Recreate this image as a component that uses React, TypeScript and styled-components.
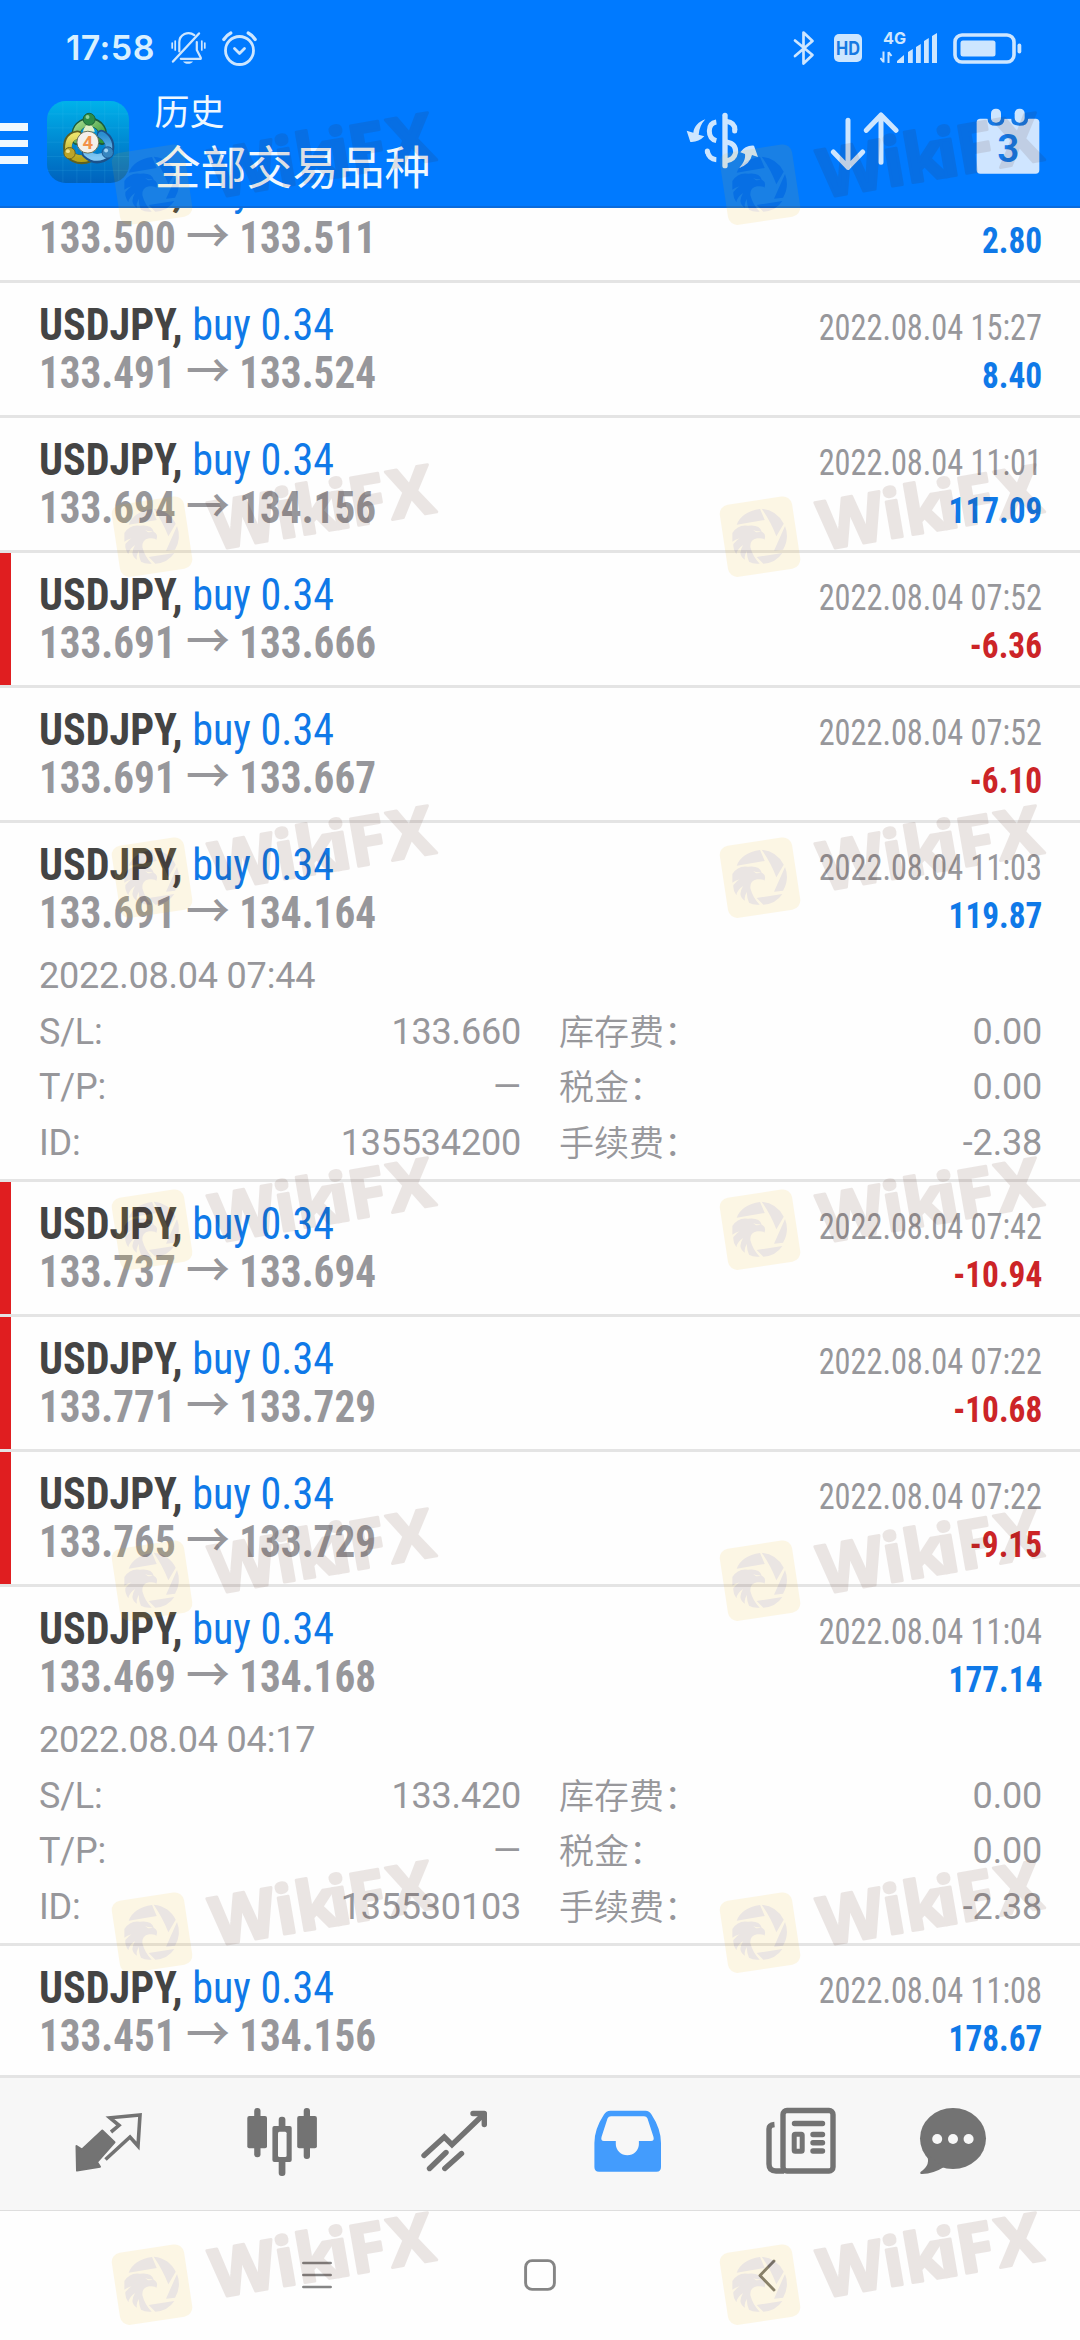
import React from "react";
import styled, { createGlobalStyle } from "styled-components";

const condensed = `"Roboto Condensed", Roboto, "Noto Sans CJK SC", sans-serif`;
const regular = `Roboto, "Noto Sans CJK SC", sans-serif`;
const pale = "#cde6ff";
const ink = "#737373";

const GlobalStyle = createGlobalStyle`
  * { box-sizing: border-box; }
  body { margin: 0; background: #fff; }
  svg { display: block; flex: none; }
`;

const Screen = styled.div`
  position: relative;
  width: 1080px;
  height: 2340px;
  overflow: hidden;
  display: flex;
  flex-direction: column;
  background: #fefefe;
  font-family: ${regular};
`;

/* ---------- header ---------- */

const Header = styled.header`
  height: 208px;
  flex: none;
  background: #007aff;
  border-bottom: 2px solid #0a6bdc;
`;

const StatusBar = styled.div`
  height: 96px;
  padding: 0 58.5px 0 66px;
  display: flex;
  align-items: center;
  justify-content: space-between;
`;

const StatusGroup = styled.div`
  display: flex;
  align-items: center;
`;

const Clock = styled.span`
  width: 105px;
  font: 600 34px/40px Inter, sans-serif;
  letter-spacing: 0.4px;
  color: #d8f0ff;
`;

const Toolbar = styled.div`
  height: 110px;
  display: flex;
  align-items: flex-start;
`;

const MenuButton = styled.div`
  width: 28px;
  margin-top: 27px;
  display: flex;
  flex-direction: column;
  gap: 9px;
`;

const MenuBar = styled.span`
  height: 7.5px;
  background: #eef8ff;
`;

const LogoBox = styled.div`
  margin: 5px 0 0 18.5px;
`;

const Titles = styled.div`
  width: 533px;
  margin-left: 26px;
  margin-top: -13px;
  color: #eff8ff;
  font-family: "Noto Sans CJK SC", sans-serif;
  font-weight: 400;
`;

const Title = styled.div`
  font-size: 35px;
  line-height: 53px;
`;

const Subtitle = styled.div`
  font-size: 46px;
  line-height: 57px;
`;

const Actions = styled.div`
  display: flex;
  align-items: center;
  margin-top: 10px;
  height: 70px;
`;

const Action = styled.div<{ $left: number }>`
  margin-left: ${(p) => p.$left}px;
`;

/* ---------- deals ---------- */

const List = styled.main`
  height: 1867px;
  flex: none;
  overflow: hidden;
`;

const Scrolled = styled.div`
  margin-top: -60px;
`;

const Deal = styled.section<{ $open: boolean; $flagged: boolean }>`
  height: ${(p) => (p.$open ? 359 : 135)}px;
  padding: 18px 38px 0 39px;
  border-bottom: 3px solid #e4e4e4;
  box-shadow: ${(p) => (p.$flagged ? "inset 11px 0 0 #e01e20" : "none")};
`;

const Line = styled.div`
  height: 48px;
  line-height: 48px;
  display: flex;
  align-items: baseline;
  justify-content: space-between;
  font-family: ${condensed};
  white-space: nowrap;
`;

const Squeezed = styled.span<{ $x: number; $from: "left" | "right" }>`
  display: inline-block;
  transform: scaleX(${(p) => p.$x});
  transform-origin: ${(p) => p.$from} center;
`;

const Symbol = styled(Squeezed)`
  font-size: 44px;
  color: #444;
`;

const Name = styled.b`
  font-weight: 700;
`;

const Side = styled.span`
  color: #0f79e8;
`;

const Prices = styled(Squeezed)`
  font-size: 44px;
  font-weight: 700;
  color: #97979b;
`;

const Arrow = styled.span`
  margin: 0 10px 0 11px;
  font: 500 47px/0 "Noto Sans CJK SC", sans-serif;
`;

const Closed = styled(Squeezed)`
  font-size: 36px;
  color: #97979b;
`;

const Profit = styled(Squeezed)<{ $loss: boolean }>`
  font-size: 36px;
  font-weight: 700;
  color: ${(p) => (p.$loss ? "#cc2427" : "#0f79e8")};
`;

const Details = styled.div`
  margin-top: 12px;
  display: grid;
  grid-template-columns: 482px 483px;
  column-gap: 38px;
  grid-auto-rows: 55.5px;
  font-size: 36px;
  line-height: 55.5px;
  letter-spacing: -0.2px;
  color: #97979b;
`;

const Opened = styled.div`
  grid-column: 1 / 3;
`;

const Field = styled.div`
  display: flex;
  justify-content: space-between;
  height: 55.5px;
`;

const LabelCjk = styled.span`
  font-family: "Noto Sans CJK SC", sans-serif;
  font-size: 35px;
  font-weight: 350;
  line-height: 50px;
  letter-spacing: 0;
`;

/* ---------- bottom ---------- */

const Tabs = styled.nav`
  height: 136px;
  flex: none;
  display: flex;
  align-items: center;
  padding: 0 62px 0 22px;
  background: #f7f7f7;
  border-top: 3px solid #e4e4e4;
  border-bottom: 1px solid #dedede;
`;

const Tab = styled.div<{ $width: number }>`
  width: ${(p) => p.$width}px;
  height: 132px;
  display: flex;
  justify-content: center;
`;

const SystemNav = styled.div`
  height: 129px;
  display: flex;
  align-items: center;
  padding: 0 0 1px 302px;
`;

const NavKey = styled.div<{ $gap: number }>`
  margin-right: ${(p) => p.$gap}px;
`;

const Mark = styled.div<{ $x: number; $y: number }>`
  position: absolute;
  left: ${(p) => p.$x}px;
  top: ${(p) => p.$y}px;
  pointer-events: none;
`;

/* ---------- icons ---------- */

const stroke = (color: string, width: number) => ({
  fill: "none",
  stroke: color,
  strokeWidth: width,
  strokeLinecap: "round" as const,
  strokeLinejoin: "round" as const,
});

const MuteIcon = () => (
  <svg width="35" height="34" viewBox="0 0 35 34" {...stroke(pale, 2.2)}>
    <path d="M2 30.500 28 2.500" strokeWidth="2.400" />
    <path d="M8.300 20.500V11.500a9.200 9.200 0 0 1 15-7.300M25.800 11v8l4 7.800v1H9.800" />
    <path d="M12 30.500h10c-1 1.700-3 2.300-5 2.300s-4-.6-5-2.300z" fill={pale} stroke="none" />
    <path d="M1.200 12v5M4.200 10v9M30.800 10v9M33.800 12v5" strokeWidth="1.700" />
  </svg>
);

const AlarmIcon = () => (
  <svg width="35" height="35" viewBox="0 0 35 35" {...stroke(pale, 2.8)}>
    <circle cx="17.500" cy="19.500" r="14" />
    <path d="M12.500 17.500l5 5 5-5" />
    <path d="M1.800 8.500q3-4.500 7-6.500M33.200 8.500q-3-4.500-7-6.500" strokeWidth="3.200" />
  </svg>
);

const BluetoothIcon = () => (
  <svg width="22" height="36" viewBox="0 0 22 36" {...stroke(pale, 2.7)}>
    <path d="M2 10.500 19.500 25 10.500 33.500V2.500L19.500 11 2 26" />
  </svg>
);

const HdIcon = () => (
  <svg width="28" height="28" viewBox="0 0 28 28">
    <rect width="28" height="28" rx="5" fill={pale} />
    <text x="14" y="20.500" textAnchor="middle" textLength="24" lengthAdjust="spacingAndGlyphs" fontFamily="Inter, sans-serif" fontWeight="700" fontSize="18.500" fill="#1679e2">HD</text>
  </svg>
);

const SignalIcon = () => (
  <svg width="58" height="34" viewBox="0 0 58 34" fill={pale}>
    <text x="3" y="13" fontFamily="Inter, sans-serif" fontWeight="700" fontSize="16" textLength="23" lengthAdjust="spacingAndGlyphs">4G</text>
    <path d="M3.500 20.500v11M.5 27l3 4M8.500 32v-11M11.500 25l-3-4" stroke={pale} strokeWidth="2" fill="none" />
    <path d="M17 32v-2l7-6v8zM28 32V21l4.800-3v14zM36 32V16l4.800-3v19zM44 32V10l4.800-3v25zM52 32V5l5-3v30z" />
  </svg>
);

const BatteryIcon = () => (
  <svg width="69" height="31" viewBox="0 0 69 31">
    <rect x="2" y="2" width="59" height="27" rx="7" {...stroke(pale, 3.6)} />
    <rect x="7.500" y="7.500" width="35" height="16" rx="2.500" fill={pale} />
    <rect x="64.500" y="10.500" width="3.800" height="10" rx="1.900" fill={pale} />
  </svg>
);

const AppLogo = () => (
  <svg width="82" height="82" viewBox="20 33 247 247">
    <defs>
      <linearGradient id="tile" x1="0" y1="0" x2="0" y2="1">
        <stop offset="0" stopColor="#00b2ea" />
        <stop offset="0.5" stopColor="#0089d2" />
        <stop offset="1" stopColor="#0062bd" />
      </linearGradient>
      <linearGradient id="green" x1="0" y1="0" x2="1" y2="1">
        <stop offset="0" stopColor="#a4d98c" />
        <stop offset="1" stopColor="#2f9434" />
      </linearGradient>
      <linearGradient id="yellow" x1="0" y1="0" x2="0" y2="1">
        <stop offset="0" stopColor="#ece36a" />
        <stop offset="1" stopColor="#b6a51c" />
      </linearGradient>
      <linearGradient id="azure" x1="0" y1="0" x2="0" y2="1">
        <stop offset="0" stopColor="#2c8fd0" />
        <stop offset="1" stopColor="#82c8f4" />
      </linearGradient>
    </defs>
    <rect x="20" y="33" width="247" height="247" rx="56" fill="url(#tile)" />
    <path d="M68 38v240M110 33v247M152 33v247M194 33v247M236 42v230M22 72h243M20 114h247M20 157h247M20 200h247M22 242h243" stroke="#4fc6f2" strokeOpacity="0.22" strokeWidth="2" />
    <g fill="none" strokeLinecap="round">
      <path d="M109 152Q98 105 147 94Q198 105 185 152" stroke="#1c5c3c" strokeWidth="27" />
      <path d="M109 150Q100 106 147 96Q196 106 185 150" stroke="url(#green)" strokeWidth="20" />
      <path d="M112 135Q74 140 84 190Q112 220 150 204" stroke="#5d6020" strokeWidth="27" />
      <path d="M112 137Q78 142 86 190Q112 216 148 202" stroke="url(#yellow)" strokeWidth="20" />
      <path d="M184 133Q218 150 206 192Q170 222 138 192" stroke="#1b528c" strokeWidth="27" />
      <path d="M184 135Q214 152 204 190Q170 216 140 190" stroke="url(#azure)" strokeWidth="20" />
    </g>
    <path d="M128 126q6-22 18-22t18 22z" fill="#e2f0c8" />
    <circle cx="147" cy="88" r="18" fill="#2c8c48" stroke="#1b6238" strokeWidth="3" />
    <circle cx="142" cy="81" r="6" fill="#8ed19a" />
    <circle cx="88" cy="190" r="17" fill="#bba428" stroke="#6f651e" strokeWidth="3" />
    <circle cx="83" cy="184" r="6" fill="#efe08a" />
    <circle cx="203" cy="188" r="17" fill="#3786c0" stroke="#1c568e" strokeWidth="3" />
    <circle cx="198" cy="182" r="6" fill="#9fd4f5" />
    <circle cx="143" cy="157" r="33" fill="#f3f0ea" stroke="#6c7358" strokeWidth="3" />
    <text x="143" y="177" textAnchor="middle" fontFamily="Roboto, sans-serif" fontWeight="700" fontSize="56" fill="#f2924a">4</text>
  </svg>
);

const CurrencyIcon = () => (
  <svg width="74" height="58" viewBox="45 35 222 174" {...stroke(pale, 15)}>
    <path d="M165 45V196" strokeWidth="16" />
    <path d="M139 65Q118 68 118 92T139 121M112 153Q117 177 139 178M168 63Q195 66 195 90M170 125Q198 130 197 156Q193 178 170 181" strokeLinecap="butt" />
    <path d="M194 90v2M112 152v2" />
    <g fill={pale} stroke="none">
      <path d="M106 57C86 64 72 78 70 97L50 91L61 125Q84 127 103 108L86 103Q88 76 106 57Z" />
      <path d="M207 203C221 190 227 174 225 161L211 156Q226 134 252 136L264 170L246 164Q240 192 207 203Z" />
    </g>
  </svg>
);

const SortIcon = () => (
  <svg width="69" height="60" viewBox="481 34 207 180" {...stroke(pale, 15)}>
    <path d="M535 62V203M491 157L535 203L579 157M634 188V46M590 92L634 46L679 92" />
  </svg>
);

const CalendarIcon = () => (
  <svg width="64" height="66" viewBox="918 23 192 198">
    <rect x="920" y="55" width="188" height="165" rx="11" fill="#cfe5ff" />
    <path d="M953 50v8q0 18 25 18t25-18v-8zM1024 50v8q0 18 25 18t25-18v-8z" fill="#1579e6" />
    <path d="M950 30h127v24.500H950z" fill="#007aff" />
    <rect x="963" y="25" width="30" height="42" rx="14" fill={pale} />
    <rect x="1034" y="25" width="30" height="42" rx="14" fill={pale} />
    <text x="1015" y="185" textAnchor="middle" fontFamily="Roboto, sans-serif" fontWeight="600" fontSize="116" fill="#157ae8">3</text>
  </svg>
);

const TradeIcon = () => (
  <svg width="70" height="132" viewBox="74 18 70 132">
    <path d="M76.500 86l5.500 3.500L102.300 70.500 114.500 82.300 97 102l3 4.700L77 110.500z" fill={ink} stroke={ink} strokeWidth="2" strokeLinejoin="round" />
    <path d="M111 72L119 65.300 110 57.800 140 55 138 86 130 77 105.500 99.500" fill="none" stroke={ink} strokeWidth="3.600" />
  </svg>
);

const CandlesIcon = () => (
  <svg width="70" height="132" viewBox="246 18 70 132" fill={ink}>
    <rect x="246.300" y="56" width="19.700" height="32.300" rx="2" />
    <rect x="253.200" y="48" width="6.300" height="49.300" rx="3" />
    <rect x="296.200" y="56" width="19.700" height="32.300" rx="2" />
    <rect x="302.700" y="48" width="6.300" height="51" rx="3" />
    <rect x="277.700" y="56.700" width="6.700" height="59.300" rx="3" />
    <rect x="271.400" y="66" width="19.300" height="36" rx="2" />
    <rect x="277" y="71.700" width="8.600" height="25.300" rx="1.500" fill="#f7f7f7" />
  </svg>
);

const TrendIcon = () => (
  <svg width="70" height="132" viewBox="420 18 70 132" {...stroke(ink, 5.4)}>
    <path d="M424 95.500L444.300 77 452 84.700 484 54" strokeLinejoin="miter" />
    <path d="M473 53.500H484.300V64.500M429.500 108.500L446 92.500M444.800 108.500L461.500 93.500" />
  </svg>
);

const InboxIcon = () => (
  <svg width="70" height="132" viewBox="593 18 70 132" fill="#439cfd">
    <path fillRule="evenodd" d="M610.500 50.700H645.500Q649.500 50.700 651.500 54.500Q661 69 661 83V107Q661 111.700 656.500 111.700H599Q594.400 111.700 594.400 107V83Q594.400 69 604 54.500Q606 50.700 610.500 50.700ZM611 56.200Q608.500 56.200 607.500 58.500L601.500 77Q600.500 81 604 81H615.800V84A11.550 11.200 0 0 0 638.900 84V81H651Q654.500 81 653.500 77L647.500 58.500Q646.500 56.200 644 56.200Z" />
  </svg>
);

const NewsIcon = () => (
  <svg width="70" height="132" viewBox="766 18 70 132" {...stroke(ink, 5.4)}>
    <rect x="783" y="50.500" width="50" height="60.500" rx="4" />
    <path d="M774.500 64.500Q769 65 769 69V104Q769 111 776 111H784" strokeLinecap="butt" />
    <path d="M794.500 63.500H822.500M813 74.500H822.500M813 82.800H822.500M813 91H822.500" />
    <rect x="794.200" y="74.200" width="8" height="17" rx="1" strokeWidth="5" />
  </svg>
);

const ChatIcon = () => (
  <svg width="70" height="132" viewBox="918 18 70 132" fill={ink}>
    <ellipse cx="953" cy="78.500" rx="33" ry="30.500" />
    <path d="M926 94Q932 104 920.500 112Q919.500 114 922 114Q934 113.500 944 107Z" />
    <g fill="#f7f7f7">
      <circle cx="937.200" cy="79" r="5" />
      <circle cx="953" cy="79" r="5" />
      <circle cx="968.600" cy="79" r="5" />
    </g>
  </svg>
);

const RecentsKey = () => (
  <svg width="30" height="28" viewBox="0 0 30 28" {...stroke("#858585", 2.7)}>
    <path d="M1.400 2H28.600M1.400 14H28.600M1.400 26H28.600" />
  </svg>
);

const HomeKey = () => (
  <svg width="32" height="32" viewBox="0 0 32 32">
    <rect x="1.600" y="1.600" width="28.800" height="28.800" rx="6.500" {...stroke("#858585", 2.9)} />
  </svg>
);

const BackKey = () => (
  <svg width="18" height="33" viewBox="0 0 18 33" {...stroke("#7d7b75", 2.9)}>
    <path d="M16 2L2 16.500L16 31" />
  </svg>
);

const WikiMark = () => (
  <svg width="340" height="123.300" viewBox="40 20 1020 370">
    <g opacity="0.1">
      <rect x="71.500" y="143.500" width="219" height="219" rx="28" fill="#f0b40a" transform="rotate(-8.600 181 253)" />
      <g fill="#441200">
        <path d="M111 217Q126 178 181 170L195 203ZM186 169Q232 174 252 214L230 252Q214 210 186 169ZM256 221Q270 258 250 292L223 295ZM171 314L248 302Q228 332 191 334Z" />
        <path fillRule="evenodd" d="M98 242Q115 215 145 220Q180 216 186 238Q201 246 194 262Q190 256 172 258Q150 262 152 285Q160 315 180 334Q160 336 148 328Q140 310 142 295Q132 310 136 322Q124 316 122 302Q124 288 130 278Q112 290 110 306Q99 290 101 275Q112 262 120 258Q106 262 98 268ZM160 233L169 240Q180 241 183 236Q172 238 160 233Z" />
        <text
          x="315 510 573 675 734 855"
          y="352"
          transform="rotate(-9.800)"
          fontFamily="'Open Sans', sans-serif"
          fontWeight="700"
          fontSize="202"
          stroke="#441200"
          strokeWidth="9"
          strokeLinejoin="round"
        >
          WikiFX
        </text>
      </g>
    </g>
  </svg>
);

/* ---------- data ---------- */

type DealData = {
  from: string;
  to: string;
  closed: string;
  profit: string;
  flagged?: boolean;
  details?: { opened: string; sl: string; id: string };
};

const deals: DealData[] = [
  { from: "133.500", to: "133.511", closed: "2022.08.04 15:32", profit: "2.80" },
  { from: "133.491", to: "133.524", closed: "2022.08.04 15:27", profit: "8.40" },
  { from: "133.694", to: "134.156", closed: "2022.08.04 11:01", profit: "117.09" },
  { from: "133.691", to: "133.666", closed: "2022.08.04 07:52", profit: "-6.36", flagged: true },
  { from: "133.691", to: "133.667", closed: "2022.08.04 07:52", profit: "-6.10" },
  { from: "133.691", to: "134.164", closed: "2022.08.04 11:03", profit: "119.87", details: { opened: "2022.08.04 07:44", sl: "133.660", id: "135534200" } },
  { from: "133.737", to: "133.694", closed: "2022.08.04 07:42", profit: "-10.94", flagged: true },
  { from: "133.771", to: "133.729", closed: "2022.08.04 07:22", profit: "-10.68", flagged: true },
  { from: "133.765", to: "133.729", closed: "2022.08.04 07:22", profit: "-9.15", flagged: true },
  { from: "133.469", to: "134.168", closed: "2022.08.04 11:04", profit: "177.14", details: { opened: "2022.08.04 04:17", sl: "133.420", id: "135530103" } },
  { from: "133.451", to: "134.156", closed: "2022.08.04 11:08", profit: "178.67" },
];

const markRows = [107.3, 459, 799.7, 1151.5, 1503, 1855, 2206.7];
const markColumns = [105.3, 713.3];

const DealRow = ({ deal }: { deal: DealData }) => (
  <Deal $open={!!deal.details} $flagged={!!deal.flagged}>
    <Line>
      <Symbol $x={0.957} $from="left"><Name>USDJPY,</Name> <Side>buy 0.34</Side></Symbol>
      <Closed $x={0.897} $from="right">{deal.closed}</Closed>
    </Line>
    <Line>
      <Prices $x={0.935} $from="left">{deal.from}<Arrow>→</Arrow>{deal.to}</Prices>
      <Profit $x={0.925} $from="right" $loss={deal.profit.startsWith("-")}>{deal.profit}</Profit>
    </Line>
    {deal.details && (
      <Details>
        <Opened>{deal.details.opened}</Opened>
        <Field><span>S/L:</span><span>{deal.details.sl}</span></Field>
        <Field><LabelCjk>库存费：</LabelCjk><span>0.00</span></Field>
        <Field><span>T/P:</span><span>—</span></Field>
        <Field><LabelCjk>税金：</LabelCjk><span>0.00</span></Field>
        <Field><span>ID:</span><span>{deal.details.id}</span></Field>
        <Field><LabelCjk>手续费：</LabelCjk><span>-2.38</span></Field>
      </Details>
    )}
  </Deal>
);

export default function App() {
  return (
    <Screen>
      <GlobalStyle />
      <Header>
        <StatusBar>
          <StatusGroup>
            <Clock>17:58</Clock>
            <MuteIcon />
            <Action $left={15.5}><AlarmIcon /></Action>
          </StatusGroup>
          <StatusGroup>
            <BluetoothIcon />
            <Action $left={19}><HdIcon /></Action>
            <Action $left={17.5}><SignalIcon /></Action>
            <Action $left={15}><BatteryIcon /></Action>
          </StatusGroup>
        </StatusBar>
        <Toolbar>
          <MenuButton><MenuBar /><MenuBar /><MenuBar /></MenuButton>
          <LogoBox><AppLogo /></LogoBox>
          <Titles>
            <Title>历史</Title>
            <Subtitle>全部交易品种</Subtitle>
          </Titles>
          <Actions>
            <Action $left={-3}><CurrencyIcon /></Action>
            <Action $left={71}><SortIcon /></Action>
            <Action $left={77}><CalendarIcon /></Action>
          </Actions>
        </Toolbar>
      </Header>
      <List>
        <Scrolled>
          {deals.map((deal, i) => <DealRow key={i} deal={deal} />)}
        </Scrolled>
      </List>
      <Tabs>
        <Tab $width={173.2}><TradeIcon /></Tab>
        <Tab $width={173.2}><CandlesIcon /></Tab>
        <Tab $width={173.2}><TrendIcon /></Tab>
        <Tab $width={173.2}><InboxIcon /></Tab>
        <Tab $width={173.2}><NewsIcon /></Tab>
        <Tab $width={130}><ChatIcon /></Tab>
      </Tabs>
      <SystemNav>
        <NavKey $gap={192}><RecentsKey /></NavKey>
        <NavKey $gap={202}><HomeKey /></NavKey>
        <NavKey $gap={0}><BackKey /></NavKey>
      </SystemNav>
      {markRows.map((y) => markColumns.map((x) => (
        <Mark key={`${x}-${y}`} $x={x} $y={y}><WikiMark /></Mark>
      )))}
    </Screen>
  );
}
